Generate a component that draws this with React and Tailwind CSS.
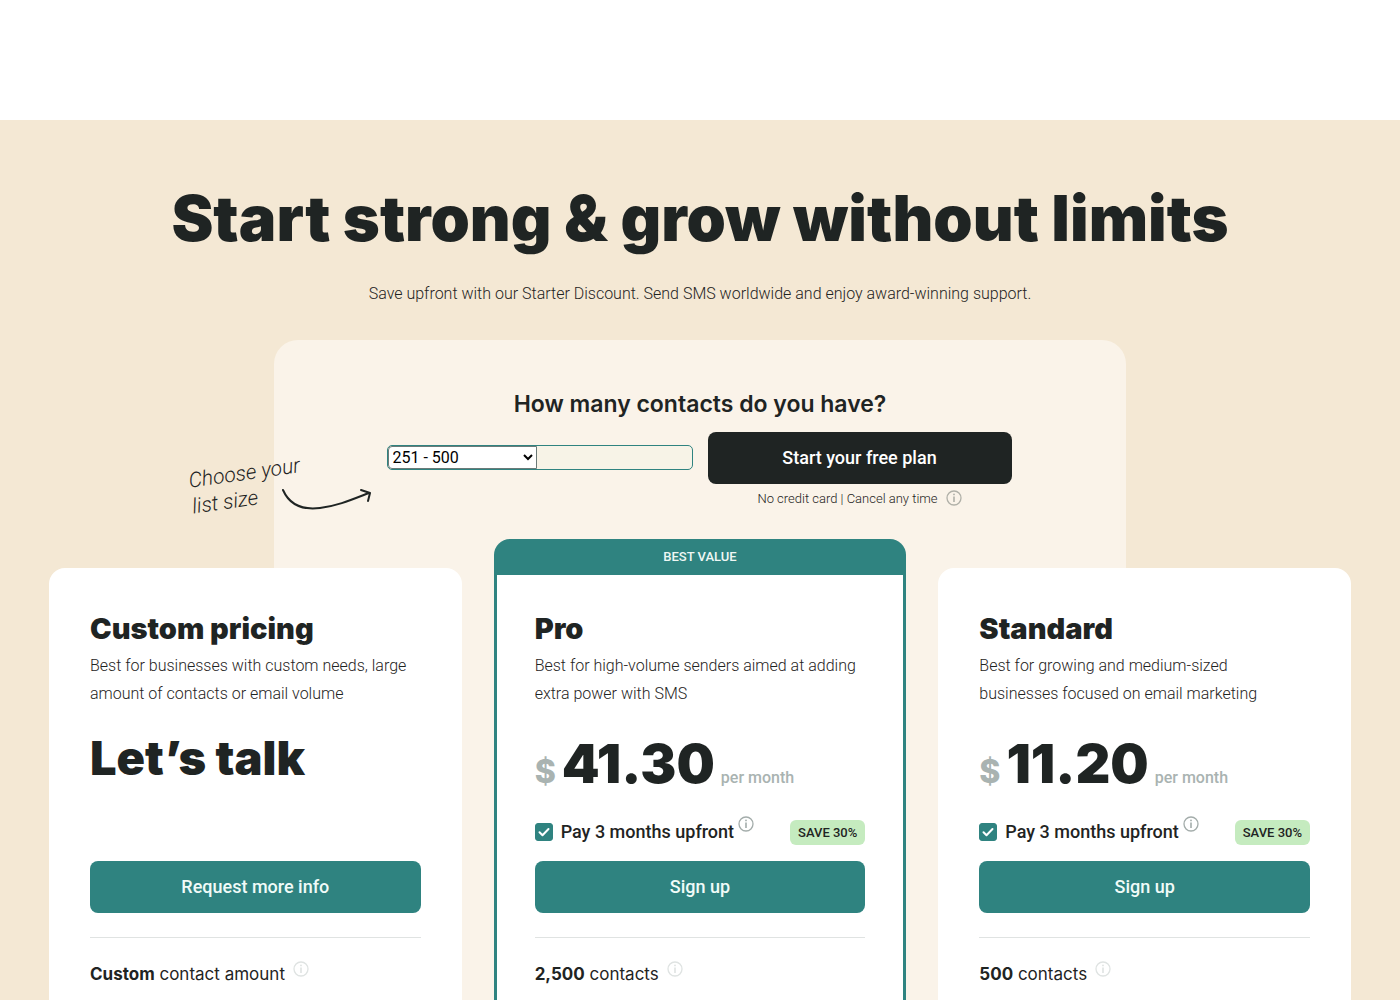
import { useState } from 'react'

const listSizes = ['0 - 250', '251 - 500', '501 - 1,000', '1,001 - 2,500', '2,501 - 5,000']

const plans = [
  {
    id: 'custom',
    name: 'Custom pricing',
    description: 'Best for businesses with custom needs, large amount of contacts or email volume',
    cta: 'Request more info',
    amount: 'Custom',
    unit: 'contact amount',
  },
  {
    id: 'pro',
    name: 'Pro',
    description: 'Best for high-volume senders aimed at adding extra power with SMS',
    price: '41.30',
    cta: 'Sign up',
    amount: '2,500',
    unit: 'contacts',
    best: true,
  },
  {
    id: 'standard',
    name: 'Standard',
    description: 'Best for growing and medium-sized businesses focused on email marketing',
    price: '11.20',
    cta: 'Sign up',
    amount: '500',
    unit: 'contacts',
  },
]

function InfoIcon({ className }) {
  return (
    <svg viewBox="0 0 16 16" className={`h-4 w-4 shrink-0 ${className}`} fill="none" aria-hidden="true">
      <circle cx="8" cy="8" r="7" stroke="currentColor" strokeWidth="1.3" />
      <circle cx="8" cy="4.4" r="0.9" fill="currentColor" />
      <path d="M8 6.4v5.6" stroke="currentColor" strokeWidth="1.6" />
    </svg>
  )
}

function Upfront({ id }) {
  const [checked, setChecked] = useState(true)

  return (
    <div className="flex h-7 items-center">
      <span className="grid h-[18px] w-[18px]">
        <input
          id={`upfront-${id}`}
          type="checkbox"
          checked={checked}
          onChange={(e) => setChecked(e.target.checked)}
          className="col-start-1 row-start-1 h-[18px] w-[18px] appearance-none rounded-[3px] border border-[#2f8380] bg-white checked:bg-[#2f8380]"
        />
        <svg viewBox="0 0 18 18" className="pointer-events-none col-start-1 row-start-1" fill="none" aria-hidden="true">
          <path d="M4.5 9.2l3 3L13.5 6" stroke="#fff" strokeWidth="2" strokeLinecap="round" strokeLinejoin="round" />
        </svg>
      </span>
      <label htmlFor={`upfront-${id}`} className="ml-2 text-lg font-medium whitespace-nowrap">
        Pay 3 months upfront
      </label>
      <InfoIcon className="mb-4 ml-1 text-[#a3acaa]" />
      <span className="ml-auto rounded-md bg-[#c5ebbf] px-2 text-[13px] leading-[25px] font-medium whitespace-nowrap">
        SAVE 30%
      </span>
    </div>
  )
}

function PlanCard({ plan }) {
  return (
    <article className={plan.best ? 'flex flex-col' : 'mt-[29px] flex flex-col rounded-t-2xl bg-white'}>
      {plan.best && (
        <p className="h-9 rounded-t-2xl bg-[#2f8380] text-center text-[13px] leading-9 font-medium text-[#eef7f4]">
          BEST VALUE
        </p>
      )}
      <div
        className={
          plan.best
            ? 'flex-1 border-x-[3px] border-[#2f8380] bg-white px-[38px] pt-[34px]'
            : 'flex-1 px-[41px] pt-[41px]'
        }
      >
        <h3 className="font-['Inter'] text-[29px] leading-10 font-black">{plan.name}</h3>
        <p className="mt-[3px] h-14 text-base leading-7 font-light">{plan.description}</p>
        {plan.price ? (
          <>
            <div className="mt-4 flex h-[78px] items-baseline font-['Inter']">
              <span className="text-[32px] font-extrabold text-[#a9b3b1]">$</span>
              <span className="ml-1.5 text-[54px] leading-[80px] font-black">{plan.price}</span>
              <span className="ml-1.5 font-['Roboto'] text-base font-medium whitespace-nowrap text-[#a9b3b1]">
                per month
              </span>
            </div>
            <div className="mt-4">
              <Upfront id={plan.id} />
            </div>
          </>
        ) : (
          <p className="mt-5 h-[118px] font-['Inter'] text-[47px] leading-[60px] font-black">Let’s talk</p>
        )}
        <button
          type="button"
          className="mt-[15px] h-[52px] w-full rounded-lg bg-[#2f8380] text-lg font-medium text-[#f0fbf8]"
        >
          {plan.cta}
        </button>
        <div className="mt-6 flex items-center border-t border-[#e0e3e2] pt-[23px] font-['Inter'] text-[17px] leading-6">
          <p>
            <b className="font-bold">{plan.amount}</b> {plan.unit}
          </p>
          <InfoIcon className="mb-2.5 ml-2 text-[#dfe3e2]" />
        </div>
      </div>
    </article>
  )
}

function ListSizeHint() {
  return (
    <div className="absolute top-[120px] -left-[84px] text-[#1f2423]">
      <p className="w-[110px] -rotate-8 text-[21px] leading-[26px] font-light whitespace-nowrap italic">
        Choose your
        <br />
        list size
      </p>
      <svg viewBox="0 0 92 28" className="absolute top-7 left-[91px] h-7 w-[92px]" fill="none" aria-hidden="true">
        <path
          d="M2 2C9 18 23 22 39 20C56 18 70 12 88 5M80 2l9 3-2 8"
          stroke="currentColor"
          strokeWidth="2"
          strokeLinecap="round"
          strokeLinejoin="round"
        />
      </svg>
    </div>
  )
}

export default function App() {
  const [size, setSize] = useState('251 - 500')

  return (
    <div className="flex min-h-screen flex-col bg-white font-['Roboto',sans-serif] text-[#1f2423]">
      <header className="h-[120px]" />
      <main className="flex flex-1 flex-col bg-[#f4e8d4] px-12 pt-[58px]">
        <h1 className="text-center font-['Inter'] text-[63px] leading-20 font-black">
          Start strong &amp; grow without limits
        </h1>
        <p className="mt-[22px] text-center text-base leading-7 font-light">
          Save upfront with our Starter Discount. Send SMS worldwide and enjoy award-winning support.
        </p>

        <div className="mx-auto mt-8 grid w-full max-w-[1302px] flex-1 grid-cols-1 grid-rows-[auto_1fr]">
          <div className="col-start-1 row-span-2 row-start-1 mx-auto w-full max-w-[852px] rounded-t-3xl bg-[#faf3e9]" />
          <section className="relative col-start-1 row-start-1 mx-auto h-[199px] w-full max-w-[852px] pt-12">
            <h2 className="text-center font-['Inter'] text-[23px] leading-8 font-semibold">
              How many contacts do you have?
            </h2>
            <div className="mt-3 flex justify-center gap-[15px] pr-0.5">
              <div className="mt-[13px] flex h-[25px] w-[306px] rounded-[5px] border border-[#2f8380] bg-[#f7f3e7]">
                <select
                  aria-label="List size"
                  value={size}
                  onChange={(e) => setSize(e.target.value)}
                  className="h-[23px] w-[149px] rounded-l-[4px] border border-[#6b7a78] bg-white text-base leading-5 text-black"
                >
                  {listSizes.map((s) => (
                    <option key={s}>{s}</option>
                  ))}
                </select>
              </div>
              <div className="w-[304px]">
                <button type="button" className="h-[52px] w-full rounded-lg bg-[#1f2423] text-lg font-medium text-white">
                  Start your free plan
                </button>
                <p className="mt-[5px] flex items-center justify-center text-[13px] leading-5 font-light">
                  No credit card | Cancel any time
                  <InfoIcon className="mb-0.5 ml-2 text-[#b0b0a8]" />
                </p>
              </div>
            </div>
            <ListSizeHint />
          </section>
          <div className="col-start-1 row-start-2 grid grid-cols-3 gap-8">
            {plans.map((plan) => (
              <PlanCard key={plan.id} plan={plan} />
            ))}
          </div>
        </div>
      </main>
    </div>
  )
}
